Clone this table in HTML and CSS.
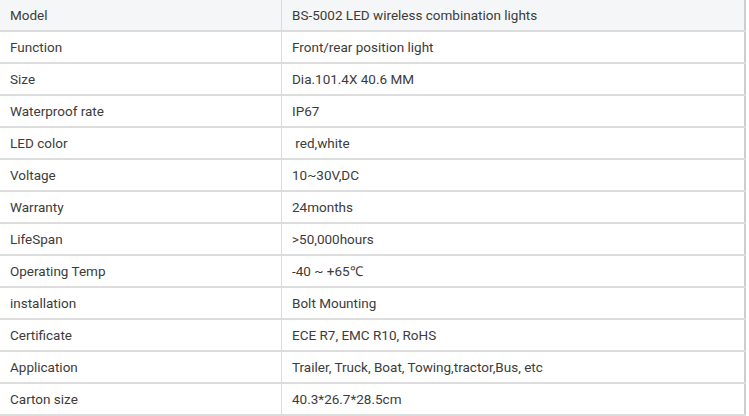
FILE: index.html
```html
<!DOCTYPE html>
<html>
<head>
<meta charset="utf-8">
<link rel="stylesheet" href="styles.css">
</head>
<body>
<table class="spec">
  <tr class="head"><td>Model</td><td>BS-5002 LED wireless combination lights</td></tr>
  <tr><td>Function</td><td>Front/rear position light</td></tr>
  <tr><td>Size</td><td>Dia.101.4X 40.6 MM</td></tr>
  <tr><td>Waterproof rate</td><td>IP67</td></tr>
  <tr><td>LED color</td><td>&nbsp;red,white</td></tr>
  <tr><td>Voltage</td><td>10~30V,DC</td></tr>
  <tr><td>Warranty</td><td>24months</td></tr>
  <tr><td>LifeSpan</td><td>&gt;50,000hours</td></tr>
  <tr><td>Operating Temp</td><td>-40 ~ +65℃</td></tr>
  <tr><td>installation</td><td>Bolt Mounting</td></tr>
  <tr><td>Certificate</td><td>ECE R7, EMC R10, RoHS</td></tr>
  <tr><td>Application</td><td>Trailer, Truck, Boat, Towing,tractor,Bus, etc</td></tr>
  <tr><td>Carton size</td><td>40.3*26.7*28.5cm</td></tr>
</table>
</body>
</html>
```
FILE: styles.css
```css
html, body {
  margin: 0;
  padding: 0;
  background: #ffffff;
}
.spec {
  border-collapse: collapse;
  width: 746px;
  table-layout: fixed;
  font-family: Roboto, "Liberation Sans", sans-serif;
  font-size: 13.5px;
  color: #3c3c3c;
}
.spec td {
  height: 30px;
  padding: 0 0 0 10px;
  border-bottom: 2px solid #dcdcdc;
  vertical-align: middle;
  white-space: nowrap;
}
.spec td:first-child {
  width: 271px;
  border-right: 1px solid #dcdcdc;
}
.spec td:last-child {
  border-right: 2px solid #cfcfcf;
}
.spec .head td {
  background: #f5f6f7;
}
```
